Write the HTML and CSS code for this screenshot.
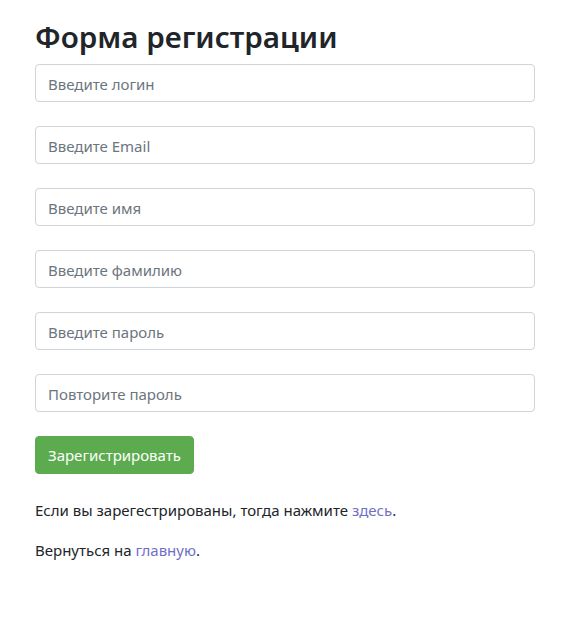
FILE: index.html
```html
<!DOCTYPE html>
<html lang="ru">
<head>
<meta charset="utf-8">
<title>Форма регистрации</title>
<link rel="stylesheet" href="styles.css">
</head>
<body>
<div class="container">
  <h2 class="title">Форма регистрации</h2>
  <form class="form">
    <input class="field" type="text" placeholder="Введите логин">
    <input class="field" type="email" placeholder="Введите Email">
    <input class="field" type="text" placeholder="Введите имя">
    <input class="field" type="text" placeholder="Введите фамилию">
    <input class="field" type="password" placeholder="Введите пароль">
    <input class="field" type="password" placeholder="Повторите пароль">
    <div class="actions"><button class="btn" type="button">Зарегистрировать</button></div>
  </form>
  <p class="note">Если вы зарегестрированы, тогда нажмите <a href="#" class="link">здесь</a>.</p>
  <p class="note">Вернуться на <a href="#" class="link">главную</a>.</p>
</div>
</body>
</html>
```

FILE: styles.css
```css
* { box-sizing: border-box; }
html, body { margin: 0; padding: 0; background: #fff; }
body {
  font-family: "Noto Sans", "Open Sans", "DejaVu Sans", sans-serif;
  font-size: 15px;
  line-height: 24px;
  color: #212529;
}
.container {
  width: 500px;
  margin-left: 35px;
  padding-top: 18px;
}
.title {
  margin: 0 0 8px 0;
  font-size: 29.6px;
  line-height: 38px;
  font-weight: 600;
  color: #212529;
}
.form {
  display: flex;
  flex-direction: column;
  gap: 24px;
}
.field {
  display: block;
  width: 500px;
  height: 38px;
  margin: 0;
  padding: 7px 12px 5px;
  font-family: inherit;
  font-size: 15px;
  color: #495057;
  background: #fff;
  border: 1px solid #ced4da;
  border-radius: 4px;
}
.field::placeholder { color: #6c757d; opacity: 1; }
.actions { display: flex; }
.btn {
  height: 38px;
  padding: 0 12px;
  font-family: inherit;
  font-size: 15px;
  color: #fff;
  background: #5cab4f;
  border: 1px solid #5cab4f;
  border-radius: 4px;
}
.note { margin: 0; padding-top: 16px; }
.form + .note { padding-top: 24px; }
.link { color: #6f6fc6; text-decoration: none; }
```
